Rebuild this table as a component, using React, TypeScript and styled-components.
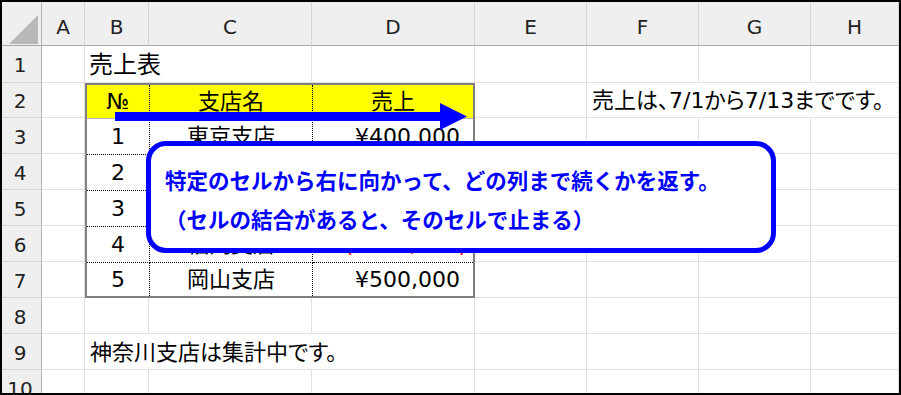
import styled, { createGlobalStyle } from "styled-components";

const GlobalStyle = createGlobalStyle`
  html, body {
    margin: 0;
    padding: 0;
    background: #fff;
  }
  body {
    font-family: "DejaVu Sans", "Noto Sans CJK JP", sans-serif;
    color: #000;
  }
`;

const COLUMNS = ["A", "B", "C", "D", "E", "F", "G", "H"];

type Note = { col: number; span: number; text: string; big?: boolean };

// text cells outside the table; span = how far the text runs over
const notes: Record<number, Note[]> = {
  1: [{ col: 1, span: 2, text: "売上表", big: true }],
  2: [{ col: 5, span: 3, text: "売上は、7/1から7/13までです。" }],
  9: [{ col: 1, span: 3, text: "神奈川支店は集計中です。" }],
};

const sales = [
  { no: 1, branch: "東京支店", amount: 400000 },
  { no: 2, branch: "大阪支店", amount: 300000 },
  { no: 3, branch: "名古屋支店", amount: 200000 },
  { no: 4, branch: "福岡支店", amount: -100000 },
  { no: 5, branch: "岡山支店", amount: 500000 },
];

const yen = (n: number) => {
  const s = "¥" + Math.abs(n).toLocaleString("en-US");
  return n < 0 ? `(${s})` : s;
};

export default function App() {
  const cells = [];

  for (let r = 1; r <= 10; r++) {
    cells.push(<RowHead key={`rh${r}`}>{r}</RowHead>);
    const rowNotes = notes[r] ?? [];
    let c = 0;
    while (c < COLUMNS.length) {
      if (r >= 2 && r <= 7 && c >= 1 && c <= 3) {
        c = 4;
        continue;
      }
      const note = rowNotes.find((n) => n.col === c);
      if (note) {
        cells.push(
          <Cell key={`${r}-${c}`} $span={note.span} $big={note.big}>
            {note.text}
          </Cell>
        );
        c += note.span;
      } else {
        cells.push(<Cell key={`${r}-${c}`} />);
        c++;
      }
    }
  }

  return (
    <>
      <GlobalStyle />
      <Frame>
        <Sheet>
          <Corner>
            <CornerMark />
          </Corner>
          {COLUMNS.map((col) => (
            <ColHead key={col}>{col}</ColHead>
          ))}
          <SalesTable>
            <TCell $head>№</TCell>
            <TCell $head>支店名</TCell>
            <TCell $head $lastCol>
              売上
            </TCell>
            {sales.map((s, i) => {
              const last = i === sales.length - 1;
              return [
                <TCell key={`n${i}`} $lastRow={last}>
                  {s.no}
                </TCell>,
                <TCell key={`b${i}`} $lastRow={last}>
                  {s.branch}
                </TCell>,
                <TCell
                  key={`a${i}`}
                  $lastRow={last}
                  $lastCol
                  $align="right"
                  $neg={s.amount < 0}
                >
                  {yen(s.amount)}
                </TCell>,
              ];
            })}
          </SalesTable>
          {cells}
        </Sheet>

        <Arrow width="360" height="34" viewBox="0 0 360 34">
          <rect x="3" y="12" width="326" height="9" fill="#0000ff" />
          <polygon points="328,3 355,16.5 328,30" fill="#0000ff" />
        </Arrow>

        <Callout>
          <CalloutLine>特定のセルから右に向かって、どの列まで続くかを返す。</CalloutLine>
          <CalloutLine>（セルの結合があると、そのセルで止まる）</CalloutLine>
        </Callout>
      </Frame>
    </>
  );
}

const Frame = styled.div`
  position: relative;
  width: 901px;
  height: 395px;
  box-sizing: border-box;
  border: 2px solid #000;
  overflow: hidden;
  background: #fff;
`;

const Sheet = styled.div`
  display: grid;
  grid-template-columns: 40px 43px 64px 163px 163px 112px 112px 112px 1fr;
  grid-template-rows: 44px 37px 35px repeat(8, 36px);
`;

const Corner = styled.div`
  display: flex;
  align-items: flex-end;
  justify-content: flex-end;
  padding: 0 3px 1px 0;
  background: #efefef;
  border-right: 1px solid #b4b4b4;
  border-bottom: 1px solid #a8a8a8;
  box-sizing: border-box;
`;

const CornerMark = styled.div`
  width: 29px;
  height: 29px;
  background: #b9b9b9;
  clip-path: polygon(100% 0, 100% 100%, 0 100%);
`;

const ColHead = styled.div`
  display: flex;
  align-items: center;
  justify-content: center;
  padding-top: 7px;
  background: #efefef;
  border-right: 1px solid #d6d6d6;
  border-bottom: 1px solid #a8a8a8;
  box-sizing: border-box;
  font-size: 20px;
  color: #222;
`;

const RowHead = styled.div`
  display: flex;
  align-items: center;
  justify-content: center;
  padding: 2px 3px 0 0;
  background: #efefef;
  border-right: 1px solid #b4b4b4;
  border-bottom: 1px solid #d6d6d6;
  box-sizing: border-box;
  font-size: 20px;
  color: #222;
`;

const Cell = styled.div<{ $span?: number; $big?: boolean }>`
  grid-column: span ${(p) => p.$span ?? 1};
  display: flex;
  align-items: center;
  padding: ${(p) => (p.$big ? "2px 0 0 4px" : "2px 0 0 5px")};
  border-right: 1px solid #e1e1e1;
  border-bottom: 1px solid #e1e1e1;
  box-sizing: border-box;
  font-size: ${(p) => (p.$big ? "24px" : "22px")};
  line-height: 28px;
  font-feature-settings: "palt";
  white-space: nowrap;
`;

const SalesTable = styled.div`
  grid-column: 3 / 6;
  grid-row: 3 / 9;
  display: grid;
  grid-template-columns: 63px 163px 1fr;
  grid-template-rows: 34px repeat(4, 36px) minmax(0, 1fr);
  border: 2px solid #7f7f7f;
  box-sizing: border-box;
  overflow: hidden;
`;

const TCell = styled.div<{
  $head?: boolean;
  $lastCol?: boolean;
  $lastRow?: boolean;
  $align?: "center" | "right";
  $neg?: boolean;
}>`
  display: flex;
  align-items: center;
  justify-content: ${(p) => (p.$align === "right" ? "flex-end" : "center")};
  padding: ${(p) =>
    p.$align === "right" ? `1px ${p.$neg ? 6 : 13}px 0 0` : "1px 0 0 0"};
  background: ${(p) => (p.$head ? "#ffff00" : "#fff")};
  color: ${(p) => (p.$neg ? "#ff0000" : "#000")};
  border-right: ${(p) => (p.$lastCol ? "none" : "1px dotted #000")};
  border-bottom: ${(p) =>
    p.$lastRow ? "none" : p.$head ? "1px solid #b4b4b4" : "1px dotted #000"};
  box-sizing: border-box;
  font-size: 22px;
  line-height: 28px;
  font-feature-settings: "palt";
  white-space: nowrap;
`;

const Arrow = styled.svg`
  position: absolute;
  left: 110px;
  top: 98px;
`;

const Callout = styled.div`
  position: absolute;
  left: 144px;
  top: 139px;
  width: 630px;
  height: 112px;
  box-sizing: border-box;
  padding: 14px 0 0 14px;
  border: 5px solid #0000ff;
  border-radius: 20px;
  background: #fff;
`;

const CalloutLine = styled.div`
  font-family: "Noto Sans CJK JP", sans-serif;
  font-weight: 700;
  font-size: 21.5px;
  line-height: 39px;
  color: #0000ff;
  white-space: nowrap;
`;
